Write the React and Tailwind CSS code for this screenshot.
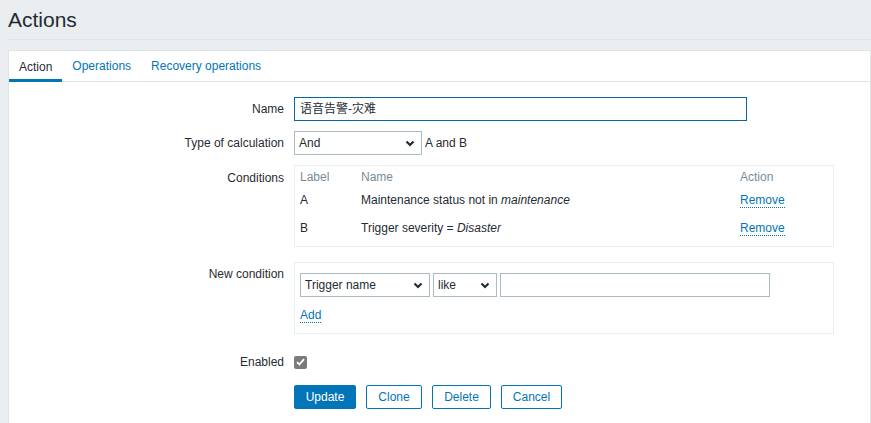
const Chevron = () => (
  <svg width="10" height="7" viewBox="0 0 10 7" className="shrink-0">
    <polyline points="1.5,1.5 5,5 8.5,1.5" fill="none" stroke="#1f2c33" strokeWidth="2.2" />
  </svg>
);

function Select({ value, width }) {
  return (
    <div
      className="h-[24px] border border-[#acbbc2] bg-white flex items-center justify-between pl-[4px] pr-[6px] text-[#1f2c33]"
      style={{ width }}
    >
      <span>{value}</span>
      <Chevron />
    </div>
  );
}

function Row({ label, children, className = "" }) {
  return (
    <div className={"flex " + className}>
      <div className="w-[275px] shrink-0 text-right text-[#1f2c33]">{label}</div>
      <div className="ml-[10px] flex-1">{children}</div>
    </div>
  );
}

const Link = ({ children }) => (
  <span className="text-[#0275b8] border-b border-dotted border-[#0275b8] leading-[13px]">{children}</span>
);

export default function App() {
  return (
    <div
      className="w-[871px] h-[423px] overflow-hidden bg-[#ebeef0] text-[12px]"
      style={{ fontFamily: '"Liberation Sans", Arial, "Noto Sans CJK SC", sans-serif' }}
    >
      <div className="ml-[8px] h-[40px] border-b border-[#dfe4e7] flex items-center">
        <h1 className="text-[21px] text-[#1f2c33] leading-none -mt-[1px]">Actions</h1>
      </div>
      <div className="ml-[8px] mt-[10px] bg-white border border-[#dfe4e7] h-[400px]">
        <div className="flex h-[31px] border-b border-[#dfe4e7]">
          <div className="px-[10px] flex items-center text-[#1f2c33] border-b-[3px] border-[#0275b8] h-[31px] pt-[3px]">Action</div>
          <div className="px-[10px] flex items-center text-[#0275b8]">Operations</div>
          <div className="px-[10px] flex items-center text-[#0275b8]">Recovery operations</div>
        </div>

        <div className="pt-[15px]">
          <Row label="Name" className="items-center">
            <div className="w-[453px] h-[24px] border border-[#0a65a3] px-[5px] flex items-center text-[#1f2c33]">
              语音告警-灾难
            </div>
          </Row>

          <Row label="Type of calculation" className="items-center mt-[10px]">
            <div className="flex items-center gap-[3px]">
              <Select value="And" width={128} />
              <span className="text-[#1f2c33]">A and B</span>
            </div>
          </Row>

          <Row label="Conditions" className="mt-[10px] [&>div:first-child]:pt-[4px]">
            <div className="w-[540px] border border-[#ebeef0] px-[5px] pt-[2px] pb-[4px]">
              <div className="flex h-[18px] items-center text-[#768d99]">
                <div className="w-[61px]">Label</div>
                <div className="flex-1">Name</div>
                <div className="w-[88px]">Action</div>
              </div>
              <div className="flex h-[28px] items-center text-[#1f2c33]">
                <div className="w-[61px]">A</div>
                <div className="flex-1">Maintenance status not in <i>maintenance</i></div>
                <div className="w-[88px]"><Link>Remove</Link></div>
              </div>
              <div className="flex h-[28px] items-center text-[#1f2c33]">
                <div className="w-[61px]">B</div>
                <div className="flex-1">Trigger severity = <i>Disaster</i></div>
                <div className="w-[88px]"><Link>Remove</Link></div>
              </div>
            </div>
          </Row>

          <Row label="New condition" className="mt-[15px] [&>div:first-child]:pt-[3px]">
            <div className="w-[540px] h-[72px] border border-[#ebeef0] px-[5px] pt-[10px]">
              <div className="flex gap-[3px]">
                <Select value="Trigger name" width={130} />
                <Select value="like" width={64} />
                <div className="w-[270px] h-[24px] border border-[#acbbc2]" />
              </div>
              <div className="mt-[9px]"><Link>Add</Link></div>
            </div>
          </Row>

          <Row label="Enabled" className="mt-[19px] items-center">
            <div className="w-[13px] h-[13px] rounded-[2px] bg-[#7b7b7b] flex items-center justify-center">
              <svg width="9" height="8" viewBox="0 0 9 8">
                <polyline points="1,4.2 3.4,6.5 8,1.2" fill="none" stroke="white" strokeWidth="1.8" />
              </svg>
            </div>
          </Row>

          <Row label="" className="mt-[14px]">
            <div className="flex gap-[10px]">
              <button className="h-[24px] w-[62px] bg-[#0275b8] border border-[#0275b8] text-white rounded-[2px]">Update</button>
              <button className="h-[24px] w-[56px] border border-[#0275b8] text-[#0275b8] rounded-[2px]">Clone</button>
              <button className="h-[24px] w-[59px] border border-[#0275b8] text-[#0275b8] rounded-[2px]">Delete</button>
              <button className="h-[24px] w-[61px] border border-[#0275b8] text-[#0275b8] rounded-[2px]">Cancel</button>
            </div>
          </Row>
        </div>
      </div>
    </div>
  );
}
